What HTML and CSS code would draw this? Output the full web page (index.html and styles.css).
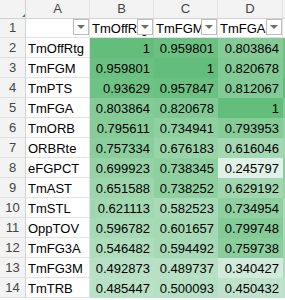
FILE: index.html
```html
<!DOCTYPE html>
<html lang="en">
  <head>
    <meta charset="UTF-8" />
    <meta name="viewport" content="width=device-width, initial-scale=1.0" />
    <title>Correlation matrix</title>
    <link rel="stylesheet" href="styles.css">
  </head>
  <body>
    <div class="sheet" id="sheet">
      <div class="cell corner"><span class="corner-mark"></span></div>
      <div class="cell col-head">A</div>
      <div class="cell col-head">B</div>
      <div class="cell col-head">C</div>
      <div class="cell col-head">D</div>
      <div class="cell col-head">E</div>

      <div class="cell row-head">1</div>
      <div class="cell filter"><span class="filter-text"></span><span class="filter-btn"></span></div>
      <div class="cell filter"><span class="filter-text">TmOffRtg</span><span class="filter-btn"></span></div>
      <div class="cell filter"><span class="filter-text">TmFGM</span><span class="filter-btn"></span></div>
      <div class="cell filter"><span class="filter-text">TmFGA</span><span class="filter-btn"></span></div>
      <div class="cell filter"><span class="filter-text">TmPTS</span><span class="filter-btn"></span></div>
    </div>

    <script>
      const rows = [
        ["TmOffRtg", "1", "0.959801", "0.803864", "0.93629"],
        ["TmFGM", "0.959801", "1", "0.820678", "0.957847"],
        ["TmPTS", "0.93629", "0.957847", "0.812067", "1"],
        ["TmFGA", "0.803864", "0.820678", "1", "0.812067"],
        ["TmORB", "0.795611", "0.734941", "0.793953", "0.702114"],
        ["ORBRte", "0.757334", "0.676183", "0.616046", "0.653921"],
        ["eFGPCT", "0.699923", "0.738345", "0.245797", "0.771208"],
        ["TmAST", "0.651588", "0.738252", "0.629192", "0.702533"],
        ["TmSTL", "0.621113", "0.582523", "0.734954", "0.566181"],
        ["OppTOV", "0.596782", "0.601657", "0.799748", "0.583462"],
        ["TmFG3A", "0.546482", "0.594492", "0.759738", "0.617406"],
        ["TmFG3M", "0.492873", "0.489737", "0.340427", "0.562113"],
        ["TmTRB", "0.485447", "0.500093", "0.450432", "0.472265"],
      ];

      // white -> green colour scale
      const min = 0.08;
      const max = 1;
      const low = [252, 252, 255];
      const high = [99, 190, 123];

      function fill(v) {
        const t = Math.max(0, Math.min(1, (v - min) / (max - min)));
        const rgb = low.map((c, i) => Math.round(c + (high[i] - c) * t));
        return `rgb(${rgb.join(",")})`;
      }

      const sheet = document.getElementById("sheet");
      rows.forEach((row, i) => {
        const head = document.createElement("div");
        head.className = "cell row-head";
        head.textContent = i + 2;
        sheet.appendChild(head);

        const label = document.createElement("div");
        label.className = "cell label";
        label.textContent = row[0];
        sheet.appendChild(label);

        row.slice(1).forEach((value) => {
          const cell = document.createElement("div");
          cell.className = "cell num";
          cell.style.setProperty("--fill", fill(parseFloat(value)));
          cell.textContent = value;
          sheet.appendChild(cell);
        });
      });
    </script>
  </body>
</html>
```

FILE: styles.css
```css
body {
  margin: 0;
  overflow: hidden;
  background: #fff;
  font-family: "Liberation Sans", Arial, sans-serif;
  font-size: 13px;
  color: #000;
}
.sheet {
  display: grid;
  grid-template-columns: 26px 64px 64px 64px 65px 64px;
  grid-template-rows: 19px 19px repeat(13, 20px);
  width: max-content;
}
.cell {
  box-sizing: border-box;
  display: flex;
  align-items: flex-end;
  padding: 0 2px;
  line-height: 16px;
  white-space: nowrap;
  overflow: hidden;
  border-right: 1px solid #e1e1e1;
  border-bottom: 1px solid #e1e1e1;
}
.corner {
  position: relative;
  background: #f3f3f3;
  border-right-color: #d2d2d2;
  border-bottom-color: #d2d2d2;
}
.corner-mark {
  position: absolute;
  right: 0;
  bottom: 1px;
  width: 0;
  height: 0;
  border-left: 3px solid transparent;
  border-bottom: 3px solid #2a8a52;
}
.col-head {
  justify-content: center;
  align-items: center;
  background: #f3f3f3;
  color: #444;
  border-bottom-color: #d2d2d2;
}
.row-head {
  justify-content: center;
  align-items: center;
  background: #f3f3f3;
  color: #444;
  padding: 0;
  border-right-color: #d2d2d2;
}
.filter {
  position: relative;
}
.filter-text {
  overflow: visible;
}
/* dropdown button sits over the clipped header text */
.filter-btn {
  position: absolute;
  top: 0;
  right: 0;
  box-sizing: border-box;
  width: 16px;
  height: 16px;
  border: 1px solid #bdbdbd;
  background: #fff;
}
.filter-btn::after {
  content: "";
  position: absolute;
  left: 3px;
  top: 5px;
  border-left: 4px solid transparent;
  border-right: 4px solid transparent;
  border-top: 4px solid #6e6e6e;
}
.num {
  justify-content: flex-end;
  padding-right: 3px;
  background: var(--fill);
  border-color: var(--fill);
}
```
